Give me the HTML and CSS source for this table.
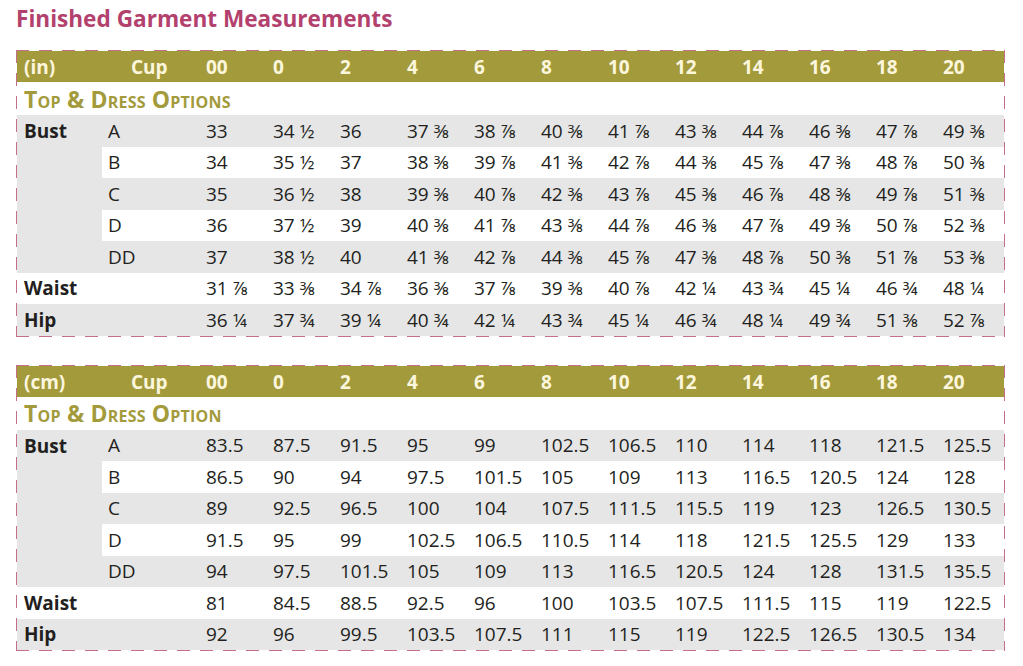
FILE: index.html
```html
<!DOCTYPE html>
<html lang="en">
<head>
<meta charset="utf-8">
<title>Finished Garment Measurements</title>
<link rel="stylesheet" href="styles.css">
</head>
<body>
<div class="page">
  <h1 class="title">Finished Garment Measurements</h1>

  <div class="frame">
    <table class="sizes">
      <colgroup>
        <col class="c-label"><col class="c-cup">
        <col class="c-num"><col class="c-num"><col class="c-num"><col class="c-num"><col class="c-num"><col class="c-num">
        <col class="c-num"><col class="c-num"><col class="c-num"><col class="c-num"><col class="c-num"><col class="c-last">
      </colgroup>
      <tr class="head">
        <th class="h-unit">(in)</th><th class="h-cup">Cup</th>
        <th>00</th><th>0</th><th>2</th><th>4</th><th>6</th><th>8</th><th>10</th><th>12</th><th>14</th><th>16</th><th>18</th><th>20</th>
      </tr>
      <tr class="sub"><td colspan="14">Top &amp; Dress Options</td></tr>
      <tr class="g">
        <td class="lbl bust" rowspan="5">Bust</td><td class="cup">A</td>
        <td>33</td><td>34 ½</td><td>36</td><td>37 ⅜</td><td>38 ⅞</td><td>40 ⅜</td><td>41 ⅞</td><td>43 ⅜</td><td>44 ⅞</td><td>46 ⅜</td><td>47 ⅞</td><td>49 ⅜</td>
      </tr>
      <tr class="w">
        <td class="cup">B</td>
        <td>34</td><td>35 ½</td><td>37</td><td>38 ⅜</td><td>39 ⅞</td><td>41 ⅜</td><td>42 ⅞</td><td>44 ⅜</td><td>45 ⅞</td><td>47 ⅜</td><td>48 ⅞</td><td>50 ⅜</td>
      </tr>
      <tr class="g">
        <td class="cup">C</td>
        <td>35</td><td>36 ½</td><td>38</td><td>39 ⅜</td><td>40 ⅞</td><td>42 ⅜</td><td>43 ⅞</td><td>45 ⅜</td><td>46 ⅞</td><td>48 ⅜</td><td>49 ⅞</td><td>51 ⅜</td>
      </tr>
      <tr class="w">
        <td class="cup">D</td>
        <td>36</td><td>37 ½</td><td>39</td><td>40 ⅜</td><td>41 ⅞</td><td>43 ⅜</td><td>44 ⅞</td><td>46 ⅜</td><td>47 ⅞</td><td>49 ⅜</td><td>50 ⅞</td><td>52 ⅜</td>
      </tr>
      <tr class="g">
        <td class="cup">DD</td>
        <td>37</td><td>38 ½</td><td>40</td><td>41 ⅜</td><td>42 ⅞</td><td>44 ⅜</td><td>45 ⅞</td><td>47 ⅜</td><td>48 ⅞</td><td>50 ⅜</td><td>51 ⅞</td><td>53 ⅜</td>
      </tr>
      <tr class="w">
        <td class="lbl">Waist</td><td class="cup"></td>
        <td>31 ⅞</td><td>33 ⅜</td><td>34 ⅞</td><td>36 ⅜</td><td>37 ⅞</td><td>39 ⅜</td><td>40 ⅞</td><td>42 ¼</td><td>43 ¾</td><td>45 ¼</td><td>46 ¾</td><td>48 ¼</td>
      </tr>
      <tr class="g">
        <td class="lbl">Hip</td><td class="cup"></td>
        <td>36 ¼</td><td>37 ¾</td><td>39 ¼</td><td>40 ¾</td><td>42 ¼</td><td>43 ¾</td><td>45 ¼</td><td>46 ¾</td><td>48 ¼</td><td>49 ¾</td><td>51 ⅜</td><td>52 ⅞</td>
      </tr>
    </table>
  </div>

  <div class="frame frame-cm">
    <table class="sizes">
      <colgroup>
        <col class="c-label"><col class="c-cup">
        <col class="c-num"><col class="c-num"><col class="c-num"><col class="c-num"><col class="c-num"><col class="c-num">
        <col class="c-num"><col class="c-num"><col class="c-num"><col class="c-num"><col class="c-num"><col class="c-last">
      </colgroup>
      <tr class="head">
        <th class="h-unit">(cm)</th><th class="h-cup">Cup</th>
        <th>00</th><th>0</th><th>2</th><th>4</th><th>6</th><th>8</th><th>10</th><th>12</th><th>14</th><th>16</th><th>18</th><th>20</th>
      </tr>
      <tr class="sub"><td colspan="14">Top &amp; Dress Option</td></tr>
      <tr class="g">
        <td class="lbl bust" rowspan="5">Bust</td><td class="cup">A</td>
        <td>83.5</td><td>87.5</td><td>91.5</td><td>95</td><td>99</td><td>102.5</td><td>106.5</td><td>110</td><td>114</td><td>118</td><td>121.5</td><td>125.5</td>
      </tr>
      <tr class="w">
        <td class="cup">B</td>
        <td>86.5</td><td>90</td><td>94</td><td>97.5</td><td>101.5</td><td>105</td><td>109</td><td>113</td><td>116.5</td><td>120.5</td><td>124</td><td>128</td>
      </tr>
      <tr class="g">
        <td class="cup">C</td>
        <td>89</td><td>92.5</td><td>96.5</td><td>100</td><td>104</td><td>107.5</td><td>111.5</td><td>115.5</td><td>119</td><td>123</td><td>126.5</td><td>130.5</td>
      </tr>
      <tr class="w">
        <td class="cup">D</td>
        <td>91.5</td><td>95</td><td>99</td><td>102.5</td><td>106.5</td><td>110.5</td><td>114</td><td>118</td><td>121.5</td><td>125.5</td><td>129</td><td>133</td>
      </tr>
      <tr class="g">
        <td class="cup">DD</td>
        <td>94</td><td>97.5</td><td>101.5</td><td>105</td><td>109</td><td>113</td><td>116.5</td><td>120.5</td><td>124</td><td>128</td><td>131.5</td><td>135.5</td>
      </tr>
      <tr class="w">
        <td class="lbl">Waist</td><td class="cup"></td>
        <td>81</td><td>84.5</td><td>88.5</td><td>92.5</td><td>96</td><td>100</td><td>103.5</td><td>107.5</td><td>111.5</td><td>115</td><td>119</td><td>122.5</td>
      </tr>
      <tr class="g">
        <td class="lbl">Hip</td><td class="cup"></td>
        <td>92</td><td>96</td><td>99.5</td><td>103.5</td><td>107.5</td><td>111</td><td>115</td><td>119</td><td>122.5</td><td>126.5</td><td>130.5</td><td>134</td>
      </tr>
    </table>
  </div>
</div>
</body>
</html>
```

FILE: styles.css
```css
html, body {
  margin: 0;
  padding: 0;
  background: #ffffff;
}

.page {
  padding: 0 0 0 16px;
  font-family: "Open Sans", "DejaVu Sans", sans-serif;
  color: #231f20;
}

.title {
  margin: 0;
  padding-top: 4px;
  height: 30px;
  line-height: 30px;
  font-size: 22.6px;
  font-weight: 700;
  color: #b3416d;
}

.frame {
  --dash: #c46f86;
  width: 987px;
  margin-top: 16px;
  padding: 1px;
  background:
    repeating-linear-gradient(90deg, var(--dash) 0 13px, transparent 13px 23px) left top / 100% 1px no-repeat,
    repeating-linear-gradient(90deg, var(--dash) 0 13px, transparent 13px 23px) left bottom / 100% 1px no-repeat,
    repeating-linear-gradient(180deg, var(--dash) 0 13px, transparent 13px 23px) left top / 1px 100% no-repeat,
    repeating-linear-gradient(180deg, var(--dash) 0 13px, transparent 13px 23px) right top / 1px 100% no-repeat;
}

.frame-cm {
  margin-top: 28px;
}

.sizes {
  width: 987px;
  table-layout: fixed;
  border-collapse: collapse;
  border-spacing: 0;
}

.c-label { width: 85px; }
.c-cup { width: 101px; }
.c-num { width: 67px; }
.c-last { width: 64px; }

.sizes th,
.sizes td {
  padding: 0 0 0 3px;
  text-align: left;
  vertical-align: middle;
  white-space: nowrap;
  font-size: 19px;
  line-height: 24px;
}

.head {
  height: 31px;
  background: #a39a3c;
}

.head th {
  font-weight: 700;
  color: #fcf6dc;
  padding-top: 1px;
}

.head .h-unit {
  padding-left: 7px;
}

.head .h-cup {
  padding-left: 29px;
}

.sub {
  height: 33px;
  background: #ffffff;
}

.sub td {
  padding-left: 7px;
  font-weight: 700;
  font-variant: small-caps;
  font-size: 23px;
  color: #a39a3c;
  letter-spacing: 0.2px;
}

.g, .w {
  height: 31.5px;
}

.g { background: #e6e6e6; }
.w { background: #ffffff; }

.sizes td.lbl {
  padding-left: 7px;
  font-weight: 700;
}

.sizes td.bust {
  vertical-align: top;
  padding-top: 4px;
  background: #e6e6e6;
}

.sizes td.cup {
  padding-left: 6px;
}
```
